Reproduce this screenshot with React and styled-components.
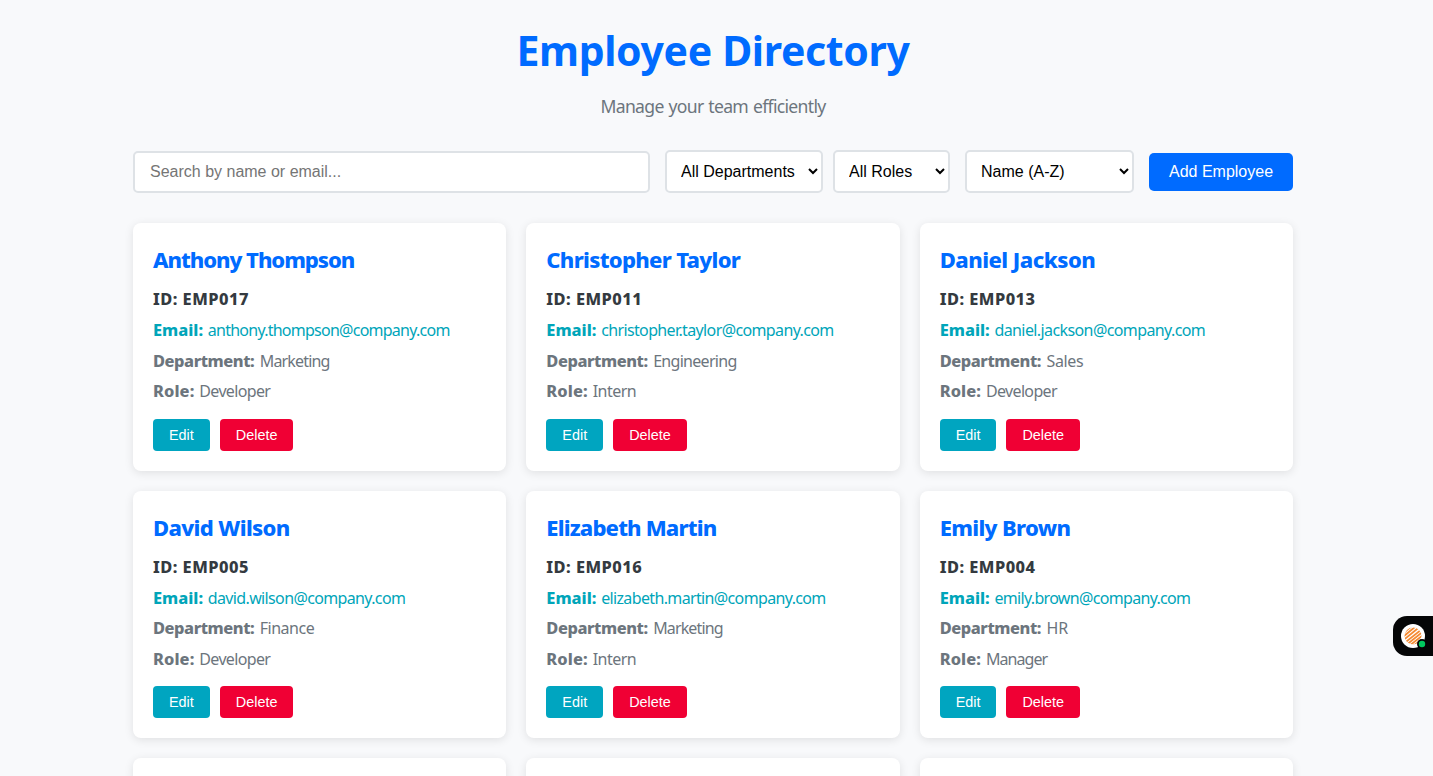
import React from "react";
import styled, { createGlobalStyle } from "styled-components";

const GlobalStyle = createGlobalStyle`
  * { box-sizing: border-box; margin: 0; padding: 0; }
  body {
    background: #f8f9fa;
    color: #343a40;
    font-family: "Segoe UI", Tahoma, "Noto Sans", sans-serif;
    font-size: 16px;
    line-height: 1.6;
    overflow: hidden;
  }
`;

const Page = styled.div`
  height: 100vh;
  overflow: hidden;
  padding-right: 7px;
  background: #f8f9fb;
`;

const Container = styled.main`
  max-width: 1200px;
  margin: 0 auto;
  padding: 20px;
`;

const Header = styled.header`
  text-align: center;
  margin-bottom: 30px;
`;

const Title = styled.h1`
  font-size: 41px;
  line-height: 61px;
  letter-spacing: -0.35px;
  color: #006bff;
  margin-bottom: 11px;
`;

const Subtitle = styled.p`
  font-size: 17.6px;
  letter-spacing: -0.7px;
  word-spacing: 1px;
  color: #6c757d;
`;

const Toolbar = styled.div`
  display: flex;
  align-items: center;
  gap: 15px;
  height: 43px;
  margin-bottom: 30px;
`;

const SearchInput = styled.input`
  flex: 1;
  min-width: 0;
  height: 42px;
  padding: 0 15px;
  border: 2px solid #dee2e6;
  border-radius: 5px;
  background: #fff;
  font: 16px "Liberation Sans", Arial, sans-serif;
  &::placeholder { color: #757575; }
`;

const Filters = styled.div`
  display: flex;
  gap: 10px;
`;

const Select = styled.select`
  width: ${(p) => p.$width}px;
  height: 43px;
  padding: 0 0 0 10px;
  border: 2px solid #dee2e6;
  border-radius: 5px;
  background: #fff;
  color: #000;
  font: 16px "Liberation Sans", Arial, sans-serif;
`;

const Button = styled.button`
  border: none;
  color: #fff;
  cursor: pointer;
  font-family: "Liberation Sans", Arial, sans-serif;
`;

const AddButton = styled(Button)`
  width: 144px;
  height: 38px;
  border-radius: 5px;
  background: #006bff;
  font-size: 16px;
`;

const ActionButton = styled(Button)`
  height: 32px;
  padding: 0 16px;
  border-radius: 4px;
  background: ${(p) => (p.$danger ? "#f00034" : "#00a5c0")};
  font-size: 14.4px;
`;

const Grid = styled.section`
  display: grid;
  grid-template-columns: repeat(3, 1fr);
  gap: 20px;
`;

const Card = styled.article`
  height: 247.6px;
  padding: 20px;
  border-radius: 8px;
  background: #fff;
  box-shadow: 0 2px 10px rgba(0, 0, 0, 0.1);
`;

const Name = styled.h3`
  font-size: 22px;
  font-weight: 800;
  line-height: 33.2px;
  letter-spacing: ${(p) => p.$tracking}px;
  color: #006bff;
  margin-bottom: 10px;
`;

const Line = styled.p`
  display: flex;
  align-items: baseline;
  height: 25.6px;
  white-space: nowrap;
  color: ${(p) => p.$color};
  margin-bottom: 5px;
`;

const Bold = styled.strong`
  font-size: 16.4px;
  font-weight: 800;
  line-height: 25.6px;
  letter-spacing: ${(p) => p.$tracking}px;
`;

const Label = styled(Bold)`
  flex: none;
  width: ${(p) => p.$width}px;
`;

const Value = styled.span`
  letter-spacing: ${(p) => p.$tracking ?? -0.65}px;
`;

const Actions = styled.div`
  display: flex;
  gap: 10px;
  margin-top: 15px;
`;

const Widget = styled.aside`
  position: fixed;
  right: 0;
  top: 616px;
  width: 40px;
  height: 40px;
  border-radius: 14px 0 0 14px;
  background: #050607;
  svg { display: block; }
`;

const employees = [
  { name: "Anthony Thompson", id: "017", email: "anthony.thompson", dept: "Marketing", role: "Developer", nt: -1.04, et: -0.75 },
  { name: "Christopher Taylor", id: "011", email: "christopher.taylor", dept: "Engineering", role: "Intern", nt: -0.69, et: -0.63 },
  { name: "Daniel Jackson", id: "013", email: "daniel.jackson", dept: "Sales", role: "Developer", nt: -0.52, et: -0.6 },
  { name: "David Wilson", id: "005", email: "david.wilson", dept: "Finance", role: "Developer", nt: -0.63, et: -0.64 },
  { name: "Elizabeth Martin", id: "016", email: "elizabeth.martin", dept: "Marketing", role: "Intern", nt: -0.83, et: -0.64 },
  { name: "Emily Brown", id: "004", email: "emily.brown", dept: "HR", role: "Manager", nt: -0.65, et: -0.68 },
];

const valueTracking = { Marketing: -0.85, Engineering: -0.7, Manager: -0.95, Intern: -0.5, Finance: -0.5, Sales: -0.35, HR: 0 };

function EmployeeCard({ person }) {
  return (
    <Card>
      <Name $tracking={person.nt}>{person.name}</Name>
      <Line $color="#343a40"><Bold $tracking={0.47}>ID: EMP{person.id}</Bold></Line>
      <Line $color="#00a5b9">
        <Label $width={54.8} $tracking={0}>Email:</Label>
        <Value $tracking={person.et}>{person.email}@company.com</Value>
      </Line>
      <Line $color="#6c757d">
        <Label $width={106.8} $tracking={-0.43}>Department:</Label>
        <Value $tracking={valueTracking[person.dept]}>{person.dept}</Value>
      </Line>
      <Line $color="#6c757d">
        <Label $width={46.3} $tracking={0.1}>Role:</Label>
        <Value $tracking={valueTracking[person.role]}>{person.role}</Value>
      </Line>
      <Actions>
        <ActionButton>Edit</ActionButton>
        <ActionButton $danger>Delete</ActionButton>
      </Actions>
    </Card>
  );
}

export default function App() {
  return (
    <Page>
      <GlobalStyle />
      <Container>
        <Header>
          <Title>Employee Directory</Title>
          <Subtitle>Manage your team efficiently</Subtitle>
        </Header>
        <Toolbar>
          <SearchInput placeholder="Search by name or email..." />
          <Filters>
            <Select $width={158}><option>All Departments</option></Select>
            <Select $width={117}><option>All Roles</option></Select>
          </Filters>
          <Select $width={169}><option>Name (A-Z)</option></Select>
          <AddButton>Add Employee</AddButton>
        </Toolbar>
        <Grid>
          {employees.map((person) => <EmployeeCard key={person.id} person={person} />)}
          <Card />
          <Card />
          <Card />
        </Grid>
      </Container>
      <Widget>
        <svg width="40" height="40" viewBox="0 0 40 40">
          <defs><clipPath id="disc"><circle cx="20" cy="20" r="8.5" /></clipPath></defs>
          <circle cx="20" cy="20" r="12" fill="#fff" />
          <g clipPath="url(#disc)" stroke="#f58a32" strokeWidth="1.8">
            <path d="M8 19L20 9M8 22.5L25 8.5M8 26L29 9M9 29L31 11.5M12 30L32 14M16 30L32 17.5M20 30L32 21" />
          </g>
          <circle cx="29" cy="28" r="5" fill="#050607" />
          <circle cx="29" cy="28" r="3.2" fill="#00c95f" />
        </svg>
      </Widget>
    </Page>
  );
}
